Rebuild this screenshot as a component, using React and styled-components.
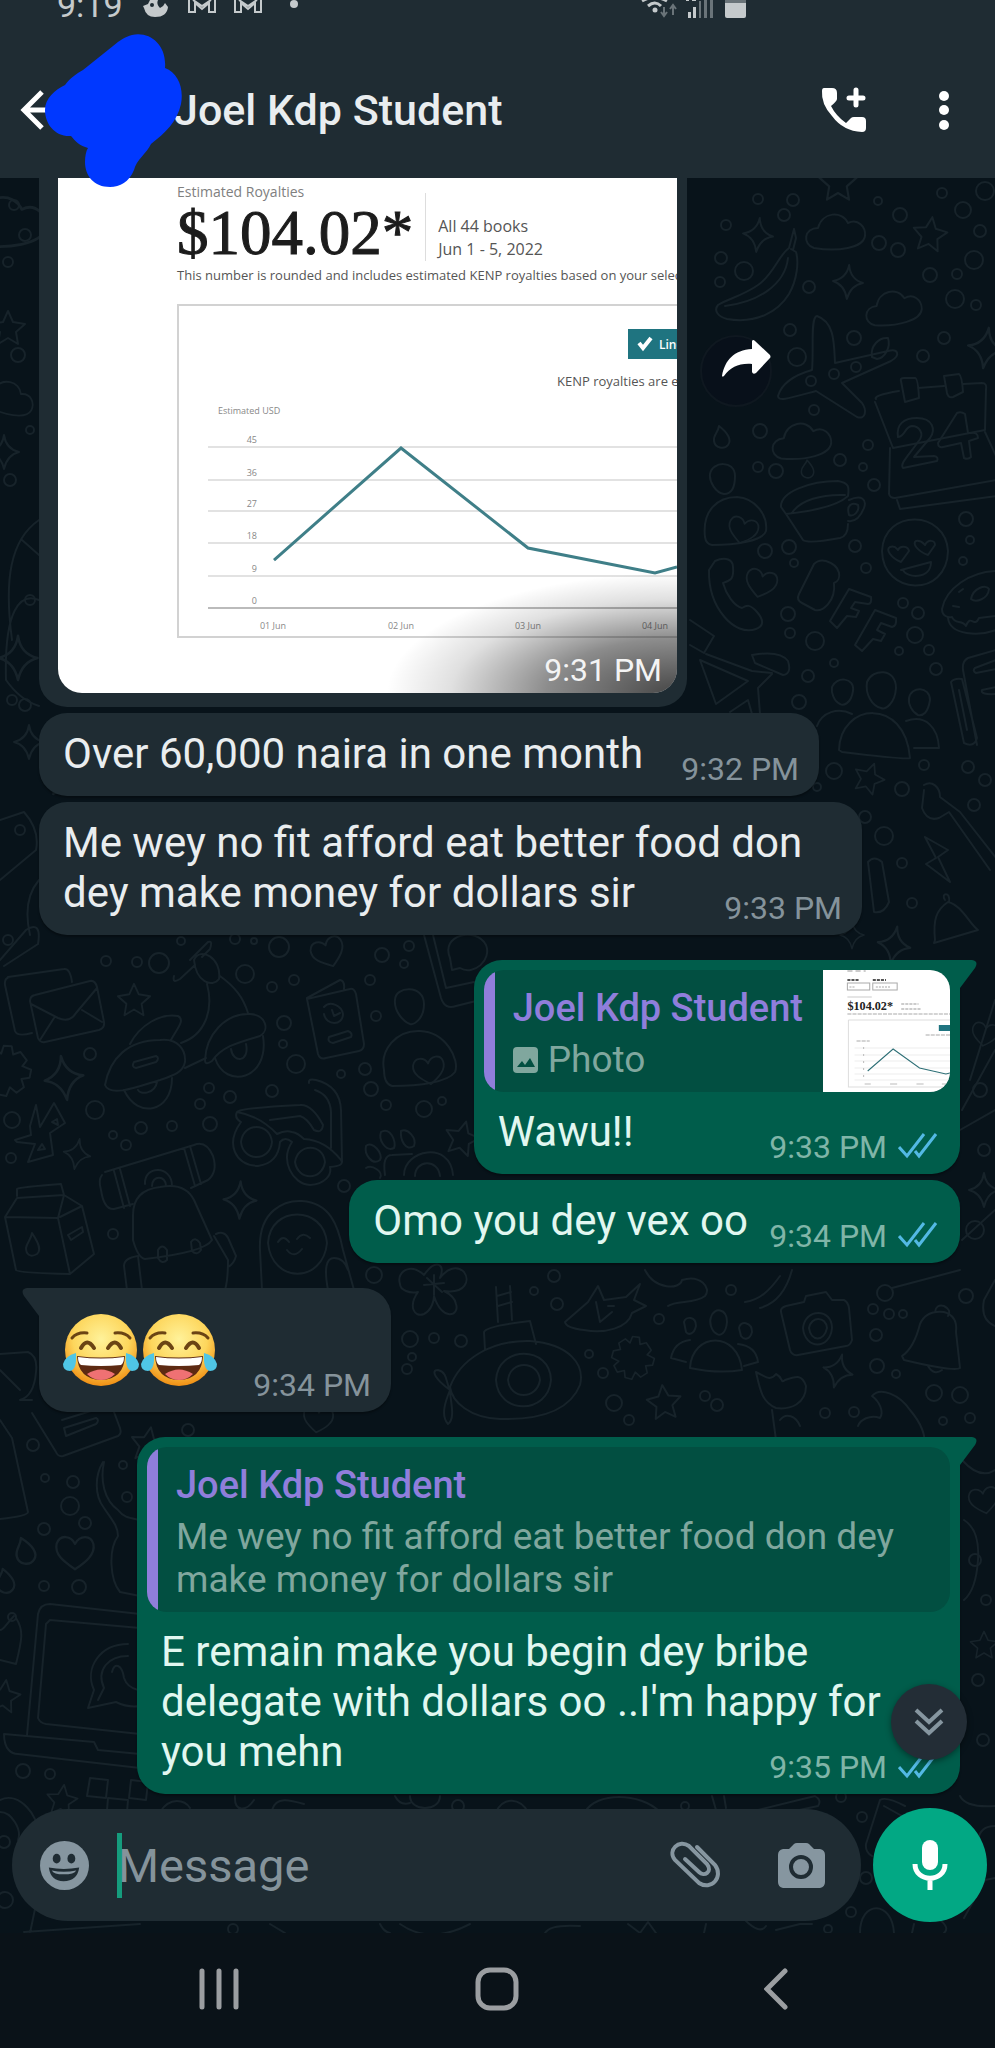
import React from "react";
import styled, {createGlobalStyle} from "styled-components";

const GlobalStyle = createGlobalStyle`
  * { box-sizing: border-box; }
  body {
    margin: 0;
    background: #0a1218;
    font-family: Roboto, "Liberation Sans", sans-serif;
  }
  button {
    padding: 0;
    border: 0;
    background: none;
    cursor: pointer;
    font: inherit;
  }
  svg { display: block; }
  p { margin: 0; }
`;
const Page = styled('div')`
  display: flex;
  flex-direction: column;
  min-height: 100vh;
`;

/* header */
const Header = styled('header')`
  position: relative;
  z-index: 2;
  background: #1f2c33;
`;
const StatusBar = styled('div')`
  display: flex;
  align-items: flex-end;
  height: 22px;
  padding: 0 248px 0 57px;
  color: #c5cacc;
`;
const Clock = styled('span')`
  font-size: 34px;
  line-height: 34px;
`;
const StatusLeft = styled('svg')`
  margin-left: 20px;
`;
const StatusRight = styled('svg')`
  margin-left: auto;
`;
const TopBar = styled('div')`
  display: flex;
  align-items: center;
  height: 156px;
  padding: 20px 26px 0 14px;
`;
const BackButton = styled('button')`
  width: 160px;
`;
const Title = styled('h1')`
  flex: 1;
  margin: 0;
  color: #e9edef;
  font-size: 43px;
  font-weight: 500;
  line-height: 50px;
`;
const HeaderButton = styled('button')`
  width: 50px;
  margin-left: 50px;
`;
const Scribble = styled('svg')`
  position: absolute;
  left: 45px;
  top: 34px;
`;

/* chat */
const Chat = styled('main')`
  position: relative;
  flex: 1;
  overflow: hidden;
  background: #08131a;
`;
const Wallpaper = styled('svg')`
  position: absolute;
  left: 0;
  top: 0;
`;
const Messages = styled('div')`
  position: relative;
  display: flex;
  flex-direction: column;
  align-items: flex-start;
  gap: 6px;
  padding: 0 35px 0 39px;
`;
const Bubble = styled('article')`
  position: relative;
  max-width: 823px;
  padding: 10px 10px 11px;
  border-radius: ${p => p.$tail && !p.$out ? "0 28px 28px 28px" : p.$tail ? "28px 0 28px 28px" : "28px"};
  align-self: ${p => p.$out ? "flex-end" : "flex-start"};
  margin-top: ${p => p.$tail ? "19px" : "0"};
  background: ${p => p.$out ? "#005d4b" : "#1f2c33"};
  color: ${p => p.$out ? "#e1f7f0" : "#e9edef"};
  box-shadow: 0 2px 2px rgba(0, 0, 0, 0.3);
`;
const TailShape = styled('svg')`
  position: absolute;
  top: 0;
  ${p => p.$out ? "left: 100%;" : "right: 100%; transform: scaleX(-1);"}
`;
const Content = styled('div')`
  display: grid;
  margin-top: ${p => p.$quoted ? "15px" : "6px"};
  padding: 0 ${p => p.$out ? "12px" : "10px"} 0 14px;
  > * { grid-area: 1 / 1; }
`;
const Body = styled('p')`
  margin-bottom: 6px;
  padding-right: ${p => p.$multi ? "34px" : p.$out ? "190px" : "156px"};
  font-size: 42px;
  line-height: 50px;
`;
const EmojiRow = styled('div')`
  display: flex;
  gap: 2px;
  padding: 9px 154px 13px 0;
`;
const Meta = styled('div')`
  display: flex;
  align-items: flex-end;
  align-self: end;
  justify-self: end;
  gap: 11px;
  color: ${p => p.$out ? "#80b5a8" : "#85939b"};
`;
const Time = styled('time')`
  font-size: 32px;
  line-height: 32px;
  white-space: nowrap;
`;
const Ticks = styled('svg')`
  margin-bottom: 4px;
`;

/* quoted message */
const Quote = styled('blockquote')`
  display: flex;
  margin: 0;
  overflow: hidden;
  border-radius: 20px;
  background: #024f41;
`;
const QuoteBar = styled('div')`
  flex: none;
  width: 11px;
  background: #8f7edb;
`;
const QuoteText = styled('div')`
  flex: 1;
  padding: 16px 20px 11px 18px;
`;
const QuoteName = styled('div')`
  margin-bottom: 8px;
  color: #8f7edb;
  font-size: 38px;
  font-weight: 500;
  line-height: 44px;
`;
const QuoteLine = styled('p')`
  display: flex;
  align-items: center;
  gap: 10px;
  color: #80a79e;
  font-size: 37px;
  line-height: 43px;
`;

/* photo message */
const PhotoRow = styled('div')`
  display: flex;
  align-items: flex-start;
`;
const PhotoBubble = styled('article')`
  padding: 0 10px 14px 19px;
  border-radius: 0 0 28px 28px;
  background: #1f2c33;
`;
const Photo = styled('figure')`
  position: relative;
  width: 619px;
  height: 515px;
  margin: 0;
  padding: 4px 0 0 119px;
  overflow: hidden;
  border-radius: 0 0 24px 24px;
  background: #fff;
  color: #555;
  font-family: "Open Sans", "Noto Sans", sans-serif;
  white-space: nowrap;
`;
const PhotoLabel = styled('div')`
  color: #808080;
  font-size: 14px;
  line-height: 20px;
`;
const AmountRow = styled('div')`
  display: flex;
  margin-top: 3px;
`;
const Amount = styled('strong')`
  color: #1c1c1c;
  font-family: "Liberation Serif", serif;
  font-size: 63px;
  font-weight: 400;
  line-height: 56px;
  -webkit-text-stroke: 1px #1c1c1c;
`;
const AmountInfo = styled('div')`
  margin: -12px 0 0 12px;
  padding: 22px 0 0 12px;
  border-left: 1px solid #ddd;
  font-size: 16px;
  line-height: 23px;
`;
const PhotoNote = styled('div')`
  margin: 4px 0 15px;
  font-size: 13px;
  line-height: 20px;
`;
const PhotoShade = styled('figcaption')`
  position: absolute;
  right: 0;
  bottom: 0;
  display: flex;
  align-items: flex-end;
  justify-content: flex-end;
  width: 290px;
  height: 120px;
  padding: 0 15px 7px 0;
  background: radial-gradient(100% 100% at 100% 100%, rgba(0, 0, 0, 0.72), rgba(0, 0, 0, 0.45) 45%, rgba(0, 0, 0, 0.12) 78%, rgba(0, 0, 0, 0));
  color: #f4f4f4;
  font-family: Roboto, "Liberation Sans", sans-serif;
`;
const ForwardButton = styled('button')`
  margin: 157px 0 0 13px;
`;
const ScrollButton = styled('button')`
  position: absolute;
  right: 28px;
  bottom: 34px;
  display: grid;
  place-items: center;
  width: 76px;
  height: 76px;
  border-radius: 50%;
  background: #232d36;
  box-shadow: 0 2px 6px rgba(0, 0, 0, 0.4);
`;

/* composer and navigation */
const Composer = styled('form')`
  position: relative;
  display: flex;
  align-items: center;
  gap: 12px;
  padding: 14px 8px 11px 12px;
`;
const Pill = styled('div')`
  display: flex;
  flex: 1;
  align-items: center;
  min-width: 0;
  height: 112px;
  padding: 0 35px 0 28px;
  border-radius: 56px;
  background: #1f2c33;
`;
const Caret = styled('span')`
  width: 5px;
  height: 65px;
  margin-left: 28px;
  background: #159c7d;
`;
const MessageInput = styled('input')`
  flex: 1;
  min-width: 0;
  height: 65px;
  margin-left: -4px;
  padding: 0;
  border: 0;
  outline: 0;
  background: transparent;
  color: #e9edef;
  font: 47px Roboto, "Liberation Sans", sans-serif;
  &::placeholder { color: #85939b; opacity: 1; }
`;
const PillButton = styled('button')`
  margin-left: ${p => p.$spaced ? "56px" : "0"};
`;
const MicButton = styled('button')`
  display: grid;
  place-items: center;
  flex: none;
  width: 114px;
  height: 114px;
  border-radius: 50%;
  background: #02a884;
`;
const NavBar = styled('nav')`
  display: grid;
  grid-template-columns: repeat(3, 1fr);
  height: 115px;
  padding: 0 80px 4px;
  background: #0a1218;
`;
const NavButton = styled('button')`
  display: grid;
  place-items: center;
`;

/* wallpaper doodles */
const STAR = "M0 -17 L5 -6 L17 -4 L8 4 L10 16 L0 10 L-10 16 L-8 4 L-17 -4 L-5 -6Z";
const SPARK = "M0 -17 Q2 -3 15 0 Q3 3 0 17 Q-3 3 -15 0 Q-2 -3 0 -17Z";
const HEART = "M0 15 C-10 8 -18 2 -16 -7 C-13 -16 -3 -14 0 -7 C4 -15 14 -15 16 -7 C18 2 9 9 0 15Z";
const CLOUD = "M-22 16 C-34 12 -32 -4 -18 -4 C-14 -20 6 -22 12 -9 C22 -14 30 -5 29 4 C27 16 2 20 -22 16Z";
const DROP = "M-3 -12 C6 -5 10 2 6 7 C2 12 -7 10 -8 3 C-9 -3 -4 -5 -3 -12Z";
const GEAR = "M-4 -25 L4 -25 L6 -17 L13 -20 L20 -12 L16 -6 L25 -3 L24 5 L16 7 L19 15 L12 21 L5 16 L2 25 L-6 24 L-8 16 L-16 19 L-21 12 L-16 6 L-25 3 L-24 -5 L-16 -8 L-19 -15 L-12 -21 L-6 -17Z";
const shapes = {star: STAR, spark: SPARK, heart: HEART, cloud: CLOUD, drop: DROP, gear: GEAR};

const dots = [
  [758,199,5],[793,200,6],[784,215,6],[726,225,5],[721,258,6],[744,271,9],[720,282,5],[809,287,6],
  [878,201,4],[900,215,7],[879,243,7],[898,250,7],[930,275,7],[957,274,5],[974,260,9],[980,231,6],
  [963,210,8],[942,193,5],[985,191,9],[955,299,9],[976,305,5],[790,330,6],[854,338,7],[797,357,9],
  [923,356,6],[944,338,6],[811,381,5],[834,374,5],[856,367,5],[814,410,5],[760,431,7],[758,467,5],
  [776,471,7],[840,460,6],[863,467,4],[868,445,5],[874,485,6],[966,519,7],[970,540,4],[963,561,4],
  [765,551,7],[789,547,7],[794,563,4],[855,546,6],[866,568,5],[788,614,7],[790,633,5],[815,641,9],
  [834,663,4],[808,676,6],[799,702,7],[903,603,5],[918,613,6],[915,635,8],[929,650,5],[899,651,4],
  [936,669,6],[834,771,8],[924,765,5],[968,767,6],[902,789,7],[985,780,6],[865,817,6],[974,805,6],
  [884,836,9],[902,863,5],[912,903,5],[817,787,4],
  [181,941,4],[106,961,5],[137,962,5],[159,963,10],[235,939,5],[279,947,10],[245,974,9],[254,941,3],
  [382,955,7],[409,946,5],[404,964,4],[370,980,5],[272,987,5],[294,980,5],[284,1023,7],[283,1044,4],
  [376,1016,5],[296,1064,9],[341,1074,4],[365,1069,6],[371,1089,7],[386,1105,5],[424,1109,8],[442,1101,4],
  [90,1054,6],[95,1110,9],[12,1120,8],[11,1158,5],[113,1135,4],[141,1128,6],[126,1145,5],[172,1126,5],
  [210,1124,7],[200,1104,5],[209,1088,5],[230,1097,6],[272,1091,6],[344,1186,6],[113,1234,5],[374,1275,8],
  [410,1339,8],[434,1338,5],[461,1341,6],[407,1369,5],[412,1357,4],[534,1291,4],[557,1304,6],[554,1276,6],
  [659,1319,5],[589,1354,4],[603,1373,5],[614,1403,8],[629,1420,5],[705,1396,5],[717,1405,6],[731,1290,5],
  [873,1309,5],[889,1314,5],[876,1335,6],[896,1374,4],[877,1366,7],[885,1293,8],[934,1393,8],[960,1395,8],
  [825,1413,5],[854,1412,5],[970,1418,5],[943,1421,4],[966,1296,7],[903,1314,4],
  [33,1445,6],[45,1478,4],[73,1482,6],[123,1465,4],[127,1497,5],[70,1506,9],[85,1523,6],[44,1529,6],
  [44,1586,5],[79,1587,7],[12,1617,4],[23,1771,7],[50,1774,5],[188,1430,6],
  [980,1090,7],[984,1150,6],[975,1230,9],[978,1680,6],[983,1740,6],[986,1600,5],[975,1560,6],
  [862,1817,5],[866,1878,6],[851,1912,5],[841,1797,5],[685,1806,4],[458,1806,6],[233,1929,5],[828,1929,4],
  [5,1900,8],[4,1842,6],[25,235,6],[14,205,5],[8,262,5],[18,355,7],[30,430,4],[12,700,5],[20,830,5],
  [8,940,5],[30,600,5],[25,705,6],[10,480,6]
];
// kind, x, y, scale, rotation
const stamps = [
  ["spark",758,235,1,6],["spark",848,282,1,4],["spark",986,348,1.2,8],["cloud",836,232,1,0],["cloud",894,308,0.95,-6],
  ["cloud",802,441,1,-4],["star",930,234,1,8],["star",838,182,1.1,0],["drop",722,438,1,0],["drop",808,470,0.8,8],
  ["heart",761,583,0.95,14],["heart",743,530,0.9,14],["star",869,778,0.9,20],["spark",894,945,1.1,10],["spark",852,935,0.8,0],
  ["heart",328,952,1,-20],["star",134,1000,0.95,0],["spark",64,1078,1.3,-8],["spark",77,1154,0.9,10],["spark",240,1200,1.1,2],
  ["gear",6,1071,1,4],["heart",429,1070,0.95,-8],["star",462,1138,1,14],["spark",838,1371,1,14],["star",664,1402,1,-6],
  ["gear",633,1358,0.85,8],["heart",318,1419,0.9,8],["star",148,1444,1,10],["heart",75,1552,1.15,0],["drop",26,1552,1.2,-6],
  ["drop",6,1582,1.1,0],["star",4,1696,0.95,8],["star",62,1800,0.9,8],["star",8,328,1,0],["spark",18,658,1.3,0],
  ["cloud",5,222,1.4,0],["spark",4,452,1,0],["spark",29,742,1,0],["cloud",8,398,0.9,20],["star",62,780,0.9,0],
  ["heart",985,1034,0.8,10],["spark",984,1190,1,0],["heart",984,1500,0.9,-10],["star",984,1645,0.8,0]
];
const drawings = [
  // banana and plane
  "M794 229 L789 248 C778 256 774 274 758 285 C744 295 728 299 718 305 C713 311 719 317 727 319 C756 324 778 312 789 294 C797 280 799 262 796 252 L791 249 M794 229 L796 238 L793 250 M788 258 C785 285 758 302 725 306",
  "M817 316 C810 317 814 350 812 370 C798 374 782 382 778 396 C778 402 790 398 816 391 L857 417 C866 420 867 410 862 403 L842 383 L891 361 C901 355 898 348 888 351 L835 363 C834 345 835 322 817 316Z M872 357 C870 346 879 337 888 338 C891 347 885 358 877 359Z",
  // calendar
  "M876 399 C874 397 880 394 899 391 M918 388 L944 386 M963 384 L982 383 Q987 383 986 389 L985 430 L893 448 L875 402 M985 432 L996 456 M890 448 L889 494 Q890 498 895 498 L996 480 M897 500 L900 509 L996 496 M901 381 Q900 378 904 378 L915 378 Q918 378 919 398 L905 402Z M944 376 L959 374 Q962 376 963 392 L953 397 Q948 398 947 393Z",
  "M898 437 C896 424 904 418 917 418 C933 418 936 430 930 438 L914 457 L934 456 Q939 457 937 461 L903 468 C900 464 905 460 918 442 C926 433 918 426 912 426 C904 427 906 436 898 437Z M957 413 L938 443 Q938 448 943 447 L961 443 L964 458 Q968 460 971 457 L969 441 L978 438 Q978 432 971 433 L968 433 L965 414 Q961 411 957 413Z",
  // cup
  "M781 507 C780 492 810 481 838 481 C850 483 849 488 848 496 C835 508 805 512 786 514Z M786 514 L803 540 Q808 544 840 538 Q848 536 848 524 M792 513 C800 500 822 494 845 495 M849 500 C862 494 867 500 864 508 C860 518 854 522 848 521 M849 515 C846 505 852 502 858 505 C860 512 853 517 849 515Z",
  // person, phone
  "M710 474 C712 461 735 460 735 476 C735 492 728 494 724 494 C716 493 709 482 710 474Z M705 537 C702 510 718 497 737 497 C755 498 768 515 766 531 C763 541 735 545 712 545 Q706 544 705 537Z",
  "M715 561 C726 556 733 560 733 567 C734 579 731 580 723 583 C726 594 734 606 742 608 C747 605 750 604 757 612 C764 620 764 626 756 629 C735 637 708 608 709 570Z",
  // BFF
  "M799 594 L814 564 Q819 559 826 561 C842 566 842 580 834 583 C836 602 822 612 815 610 L802 603 Q796 600 799 594Z M830 621 L849 589 L871 597 Q872 604 868 604 L855 602 L851 608 L859 611 L856 617 L847 616 L837 628Z M855 645 L875 610 L896 618 Q897 626 892 627 L881 623 L877 630 L885 634 L881 641 L873 639 L862 651Z",
  // love face
  "M882 551 C884 508 946 510 948 551 C947 598 883 596 882 551Z M901 570 L931 562 C931 580 906 578 903 570Z M901 562 C891 558 885 549 890 547 C895 545 897 549 898 550 C900 545 908 546 909 551Z M928 555 C917 551 912 543 916 541 C921 540 924 544 925 545 C928 539 935 540 935 545Z",
  // doughnut, notes
  "M996 571 C970 572 946 588 942 609 C942 616 948 618 952 617 C955 625 962 619 966 626 C971 613 974 629 979 618 L996 616 M948 618 C950 636 980 636 996 630 M971 599 C973 588 986 584 989 589 C988 599 976 603 971 599Z M953 606 L959 607 M959 592 L963 589",
  "M996 650 L968 658 Q962 661 963 670 L977 745 M996 660 L975 668 Q972 671 976 673 L996 669 M996 687 L982 690 Q980 695 996 694 M951 682 Q954 678 962 679 L977 738 Q974 748 964 743Z M959 690 L967 730",
  // ladder figure, group
  "M690 620 L714 636 L704 653 L690 645 M706 654 L752 671 L772 673 M700 660 L716 704 L748 681Z M752 655 Q780 650 788 661 Q792 674 783 675 L755 663Z M772 674 L758 688 L760 714 M730 712 L748 700 L752 714",
  "M832 687 C836 676 855 677 853 691 C851 704 843 706 840 704 C834 701 831 693 832 687Z M867 682 C873 668 896 668 896 688 C895 704 885 710 881 708 C872 706 865 694 867 682Z M909 698 C911 686 930 686 930 700 C928 713 923 716 918 715 C912 712 908 704 909 698Z M839 750 C840 703 905 696 910 758 Q908 760 842 752Z M852 714 C838 707 822 712 817 726 M906 721 C926 714 938 728 939 748 L914 748",
  // pick, lightning, guitar
  "M924 785 C932 780 940 787 940 797 L960 812 L996 858 M924 790 L922 808 Q927 822 939 818 L949 812 L990 870 M868 862 Q874 855 882 862 L889 902 Q884 914 874 912Z M925 837 L948 850 L938 857 L950 882 L926 864 L936 858Z",
  "M935 940 C933 920 936 910 948 902 C962 905 970 925 978 930 L934 943Z M945 900 C940 893 951 891 949 902",
  // envelopes and scooter
  "M8 977 L64 969 Q70 968 72 982 M5 985 Q4 978 10 977 M5 985 L15 1031 Q17 1037 32 1033 M35 995 L90 981 Q95 980 97 987 L104 1022 Q105 1028 99 1030 L45 1042 Q40 1043 38 1038 L30 1001 Q30 996 35 995Z M31 1004 L58 1018 Q70 1023 76 1013 L97 988 M40 1040 L54 1018 M82 1010 L102 1022",
  "M105 1085 C110 1058 128 1040 160 1040 C178 1038 186 1050 185 1062 C183 1072 175 1075 160 1080 C140 1086 110 1098 105 1085Z M130 1044 C140 1025 160 1013 178 1016 C186 1020 176 1030 171 1040 M124 1090 C138 1120 172 1112 172 1078 M138 1090 C140 1095 155 1094 157 1082 M134 1062 L156 1056 Q160 1058 156 1062 L136 1068 Q131 1067 134 1062Z M181 1043 C205 1035 214 1010 207 984 M220 976 C235 987 243 997 248 1013 M185 1068 L206 1058 M205 1060 C206 1035 225 1013 250 1014 C266 1015 270 1030 260 1036 C240 1042 222 1046 212 1061 Q205 1066 205 1060Z M215 1058 C225 1090 270 1080 263 1036 M231 1049 C233 1064 250 1062 246 1044 M174 976 Q172 984 180 979 L195 965 M190 960 L208 942 Q213 940 210 949 L202 957 M194 960 C200 946 222 958 219 979 C212 988 196 982 194 960Z",
  // passport
  "M307 998 L340 980 Q345 981 344 989 M307 999 L350 989 Q354 988 356 994 L364 1044 Q364 1050 359 1051 L326 1058 Q320 1060 318 1054Z M324 1007 C330 1000 342 1006 343 1014 C343 1026 326 1026 324 1014 M332 1010 L334 1016 L340 1013 M329 1037 L348 1031 Q353 1033 351 1037 L333 1043 Q327 1042 329 1037Z",
  "M395 1000 C395 986 424 984 424 1004 C424 1020 413 1025 410 1024 C402 1021 394 1010 395 1000Z M384 1070 C380 1050 396 1030 420 1031 C446 1032 460 1060 455 1072 C448 1082 420 1086 392 1086 Q384 1084 384 1070Z",
  // phone edge
  "M424 935 L441 998 Q445 1010 456 1006 L476 1001 M433 935 L446 988 L474 982 M450 958 C440 935 476 926 486 945 C492 960 474 976 460 968 L452 970Z",
  // sunglasses
  "M237 1112 Q240 1108 300 1105 Q312 1104 323 1125 Q322 1134 314 1130 Q307 1118 300 1116 L270 1120 M309 1083 Q308 1078 316 1080 Q340 1086 341 1110 L342 1162 M315 1090 Q330 1095 331 1112 L331 1148 M237 1112 Q234 1118 241 1122 C225 1144 235 1165 258 1166 C272 1164 279 1155 280 1142 Q285 1136 292 1142 C280 1160 292 1184 310 1185 C325 1184 332 1175 330 1167 Q345 1166 341 1160 Q325 1140 304 1139 Q298 1133 292 1132 Q285 1130 277 1134 Q260 1116 237 1112Z M241 1142 C243 1122 270 1122 272 1142 C270 1162 243 1162 241 1142Z M295 1162 C298 1143 323 1143 325 1162 C322 1181 298 1181 295 1162Z",
  // bandage and rocks
  "M15 1140 L31 1135 L30 1126 L36 1105 L40 1127 L54 1103 L65 1123 L50 1133 L53 1155 L28 1162 L35 1144 L17 1142Z M52 1122 L57 1119 L58 1125Z M38 1150 L42 1144 L45 1149Z",
  // backpack and mat
  "M105 1172 L194 1145 Q206 1140 213 1156 Q218 1172 208 1180 L191 1188 M102 1175 Q98 1180 101 1190 Q104 1210 114 1209 L133 1204 M114 1171 L124 1208 M120 1169 L130 1206 M184 1148 L195 1186 M190 1146 L201 1184 M145 1184 C144 1165 172 1165 172 1186 M152 1186 C152 1175 166 1175 166 1186",
  "M133 1215 Q133 1190 160 1187 Q185 1182 194 1200 L212 1240 Q205 1252 145 1259 Q138 1258 133 1240Z M214 1236 L228 1260 Q228 1280 225 1290 M138 1256 L142 1290 M138 1256 Q124 1258 124 1266 L127 1290 M216 1234 Q225 1230 229 1240 L236 1256 Q234 1264 228 1267 M158 1250 Q162 1243 167 1250 L167 1260 Q162 1265 158 1258Z M191 1242 Q195 1236 200 1243 L201 1250 Q197 1256 192 1251Z",
  // milk carton
  "M17 1196 L17 1189 Q20 1187 61 1184 L64 1195 L17 1198 L5 1217 L16 1270 Q18 1273 70 1274 L94 1254 L82 1206 L64 1195 L58 1218 L6 1217 M58 1218 L70 1274 M60 1217 L82 1206 M32 1233 C38 1242 42 1250 37 1254 C30 1258 26 1254 26 1248 C27 1242 31 1240 32 1233Z M68 1235 L82 1227 L83 1232 L71 1240Z",
  // hooded face, paw
  "M262 1290 L260 1250 C258 1210 285 1200 302 1201 C330 1203 338 1225 343 1250 L354 1290 M268 1243 C270 1205 324 1205 327 1243 C323 1284 272 1284 268 1243Z M278 1242 Q283 1234 289 1242 M297 1239 Q303 1231 310 1238 M287 1250 Q294 1259 302 1249 M328 1290 Q322 1258 334 1258 Q344 1258 348 1270",
  "M385 1175 Q382 1155 392 1155 L412 1154 M404 1175 C404 1150 450 1140 453 1175 M415 1176 C415 1160 438 1158 440 1176 M366 1146 C372 1140 384 1154 380 1160 C372 1166 364 1154 366 1146Z M381 1132 C390 1126 397 1142 394 1148 C386 1152 378 1140 381 1132Z M401 1131 C408 1128 417 1138 414 1146 C406 1152 400 1140 401 1131Z M366 1168 C372 1164 384 1172 380 1178",
  // flower
  "M424 1275 C410 1262 396 1272 400 1284 C400 1290 410 1294 418 1292 C408 1306 414 1318 424 1314 C432 1310 434 1300 434 1296 C442 1322 460 1316 456 1304 C455 1298 450 1294 444 1291 C466 1294 470 1280 464 1272 C456 1264 446 1270 440 1278 C446 1264 436 1258 424 1275Z M434 1275 L434 1295 M424 1285 L444 1283 M427 1278 L442 1292",
  // submarine
  "M496 1287 L498 1322 M510 1286 L512 1320 M497 1296 L511 1292 M498 1306 L512 1302 M485 1350 L484 1332 Q486 1326 530 1321 L536 1344 M450 1387 C460 1360 490 1340 530 1341 C570 1344 585 1365 580 1385 C570 1410 540 1420 500 1419 C470 1418 452 1402 450 1387Z M496 1380 C498 1345 550 1345 551 1380 C548 1415 498 1415 496 1380Z M508 1380 C510 1360 538 1360 540 1380 C537 1400 510 1400 508 1380Z M450 1390 C436 1380 430 1370 438 1370 C448 1372 446 1384 450 1390 C446 1400 440 1415 448 1424 C456 1418 450 1400 450 1390Z",
  // fish, monkey
  "M565 1322 L588 1302 L598 1286 L604 1300 L626 1297 L640 1284 L634 1300 L646 1306 L632 1313 C628 1328 605 1334 584 1330 Q566 1328 565 1322Z M596 1302 L600 1322 L612 1312 M608 1306 L614 1306",
  "M645 1270 C655 1290 680 1290 682 1280 C700 1274 712 1288 705 1296 C695 1304 676 1300 668 1306 M745 1302 C760 1300 770 1290 780 1276 M760 1308 C775 1304 786 1292 792 1270 M892 1288 L960 1270",
  // people group
  "M711 1317 C714 1307 727 1308 727 1322 C726 1334 720 1336 717 1334 C711 1331 709 1322 711 1317Z M684 1322 C686 1316 696 1316 696 1326 C694 1335 688 1335 686 1332Z M739 1328 C740 1320 752 1322 752 1332 C750 1340 744 1340 741 1336Z M690 1368 C692 1332 738 1330 742 1370 Q718 1374 690 1368Z M690 1340 Q674 1342 671 1358 L686 1362 M738 1344 Q756 1346 758 1362 L744 1366",
  // camera, bell, tulip
  "M781 1312 Q780 1308 786 1306 L804 1302 L806 1296 L826 1292 L832 1300 L844 1300 Q848 1302 849 1308 L852 1340 Q850 1346 846 1346 L798 1355 Q792 1356 790 1350Z M803 1328 C805 1308 832 1308 832 1328 C830 1350 805 1350 803 1328Z M809 1328 C811 1316 826 1316 827 1328 C824 1342 811 1342 809 1328Z",
  "M902 1356 Q914 1348 920 1324 Q926 1310 944 1312 Q958 1316 956 1332 L960 1368 Q955 1372 904 1360Z M935 1312 Q936 1304 944 1306 Q952 1310 948 1316 M928 1366 Q934 1376 942 1370",
  "M756 1372 C765 1376 770 1382 776 1374 C784 1378 780 1384 785 1380 C796 1376 802 1374 806 1386 C806 1404 790 1410 776 1408 C762 1402 760 1390 756 1372Z M772 1410 L776 1440 M780 1420 C786 1412 796 1416 800 1426",
  // horseshoe magnet, left notes
  "M872 1396 C880 1386 900 1395 910 1410 C922 1424 925 1436 924 1440 M872 1396 C880 1402 884 1412 880 1418 C870 1414 860 1420 858 1426",
  "M32 1413 L56 1452 Q58 1457 63 1456 L118 1436 Q122 1434 120 1428 L114 1412 M62 1420 L94 1410 M64 1428 L96 1418 Q100 1420 96 1424 L66 1436Z",
  "M0 1420 L12 1438 L28 1512 Q28 1516 0 1519 M0 1354 L28 1352 Q38 1356 36 1372 Q34 1396 20 1400 L32 1400 M0 1370 L20 1390",
  // genie
  "M103 1462 C95 1475 94 1495 104 1508 C112 1520 118 1526 118 1536 C108 1550 110 1580 120 1592 L140 1596 M104 1462 C100 1480 104 1500 118 1510 C124 1518 130 1518 140 1520",
  // laptop
  "M140 1614 L50 1604 Q40 1604 38 1614 L27 1735 M140 1628 L50 1620 L46 1624 L38 1718 Q40 1723 46 1724 L140 1734 M4 1734 L94 1742 L98 1750 L140 1754 M4 1734 C4 1750 12 1754 18 1754 L140 1768",
  "M88 1708 L94 1690 C84 1668 100 1644 128 1644 M98 1700 L104 1688 C96 1670 108 1656 128 1656 M140 1706 C128 1708 120 1704 116 1702 L88 1708 M112 1672 C114 1662 122 1664 124 1678 C126 1684 130 1688 138 1690",
  "M14 1616 C6 1624 4 1630 0 1630 M16 1618 C24 1630 22 1640 16 1664 L0 1660",
  // checker flag and lower strip
  "M90 1778 L108 1780 L106 1798 L87 1796Z M131 1780 L148 1782 L146 1800 L129 1798Z M108 1798 L128 1800 L127 1812 L107 1810Z M0 1800 C20 1790 40 1820 36 1828 M0 1812 C12 1812 22 1830 18 1840",
  "M160 1812 C170 1796 185 1800 190 1808 M235 1796 C234 1812 246 1812 254 1800 M272 1810 C276 1796 290 1800 304 1804 M410 1796 C410 1812 440 1812 440 1796 M395 1796 Q400 1806 410 1803 M496 1812 C504 1796 520 1798 528 1812 M585 1812 C596 1792 640 1792 660 1812 M712 1796 L716 1810 M724 1796 L726 1808 M750 1812 L815 1796 Q822 1800 818 1806 L790 1812",
  "M880 1800 Q886 1796 905 1806 M880 1800 L866 1844 Q865 1852 872 1856 M884 1806 L902 1816 M960 1796 Q966 1808 995 1806 M978 1840 Q980 1826 995 1826 M995 1878 L985 1880 L964 1918",
  "M30 1933 L40 1885 M24 1932 L140 1924 M270 1924 L285 1933 M380 1924 Q384 1932 390 1933 M400 1924 Q430 1945 470 1924 M545 1933 Q550 1924 580 1926 M628 1924 L640 1933 L648 1922 L656 1933 M706 1924 L704 1933 M745 1920 Q760 1935 766 1926 M776 1930 L800 1924 L812 1924 M860 1933 C860 1900 892 1900 894 1933 M912 1933 L914 1924 M940 1920 Q950 1928 944 1933",
  // left margin
  "M39 520 C10 540 4 580 12 640 M39 600 C20 592 4 610 6 680 Q20 700 39 706 M39 555 L22 540 M0 820 L24 812 Q40 830 36 850 L0 880 M0 960 L26 930 Q42 920 38 944 L4 966 M39 880 Q22 900 30 935",
  // right strip
  "M995 1280 L984 1300 Q980 1320 995 1326 M962 1460 Q980 1480 995 1470 M964 1520 Q980 1530 978 1560 Q976 1590 964 1600 M995 1000 L970 1080 M962 1110 L995 1050 M960 1130 L995 1110 M962 1240 L995 1210"
];

const Backdrop = () => <Wallpaper width="995" height="1755" viewBox="0 178 995 1755" fill="none" stroke="#17232a" strokeWidth="2" strokeLinejoin="round" strokeLinecap="round" aria-hidden="true">
  {dots.map(([x, y, r]) => <circle key={`${x}-${y}`} cx={x} cy={y} r={r} />)}
  {stamps.map(([kind, x, y, scale, turn]) => (
    <path key={`${x}-${y}`} d={shapes[kind]} transform={`translate(${x} ${y}) rotate(${turn}) scale(${scale})`} />
  ))}
  {drawings.map((d, i) => <path key={i} d={d} />)}
</Wallpaper>;

const DoubleTick = () => <Ticks width="40" height="27" viewBox="0 0 40 27" fill="none" stroke="#53b9e4" strokeWidth="3" aria-label="Read">
  <path d="M1 15 L9 24 L26 2" />
  <path d="M17 19 L21 24 L38 2" />
</Ticks>;

const Tail = ({out}) => <TailShape $out={out} width="17" height="28" viewBox="0 0 17 28" fill={out ? "#005d4b" : "#1f2c33"} aria-hidden="true">
  <path d="M0 0 H12 Q19 1 15 8 L0 28Z" />
</TailShape>;

const Stamp = ({out, children}) => <Meta $out={out}>
  <Time>{children}</Time>
  {out && <DoubleTick />}
</Meta>;

const Message = ({out, tail, multi, time, quote, children}) => <Bubble $out={out} $tail={tail}>
  {tail && <Tail out={out} />}
  {quote}
  <Content $out={out} $quoted={!!quote}>
    <Body $out={out} $multi={multi}>{children}</Body>
    <Stamp out={out}>{time}</Stamp>
  </Content>
</Bubble>;

const JoyFace = ({id}) => <svg width="76" height="75" viewBox="0 0 76 75" role="img" aria-label="Face with tears of joy">
  <defs>
    <radialGradient id={id} cx="50%" cy="35%" r="65%">
      <stop offset="0" stopColor="#fff29a" />
      <stop offset="0.6" stopColor="#fdd65c" />
      <stop offset="1" stopColor="#f08f14" />
    </radialGradient>
  </defs>
  <circle cx="38" cy="37" r="36" fill={`url(#${id})`} />
  <g fill="none" stroke="#6b4414" strokeLinecap="round">
    <path d="M9 25 Q14 19 24 20 M67 25 Q62 19 52 20" strokeWidth="3" />
    <path d="M18 35 Q24 24 31 35 M45 35 Q52 24 58 35" strokeWidth="4" />
  </g>
  <path d="M14 43 Q38 46 62 43 Q61 66 38 67 Q15 66 14 43Z" fill="#5d2a12" />
  <path d="M15 44 Q38 47 61 44 Q61 50 58 52 Q38 54 18 52 Q15 50 15 44Z" fill="#fff" />
  <path d="M24 61 Q38 52 52 61 Q46 67 38 67 Q30 67 24 61Z" fill="#ef7173" />
  <path d="M13 40 Q2 43 0 51 Q0 58 7 58 Q14 57 13 40Z M63 40 Q74 43 76 51 Q76 58 69 58 Q62 57 63 40Z" fill="#4fc6e6" />
</svg>;

const chartRows = [["45", 147], ["36", 180], ["27", 211], ["18", 243], ["9", 276], ["0", 308]];
const chartDays = [["01 Jun", 96], ["02 Jun", 224], ["03 Jun", 351], ["04 Jun", 478]];

const RoyaltyChart = () => <svg width="500" height="345" viewBox="0 0 500 345" fontFamily="Open Sans, sans-serif" fill="#888">
  <rect x="1" y="5" width="600" height="332" fill="none" stroke="#d2d2d2" strokeWidth="2" />
  <rect x="451" y="29" width="60" height="30" fill="#1f7480" />
  <path d="M462 43 L466 48 L474 38" fill="none" stroke="#fff" strokeWidth="4" />
  <text x="482" y="49" fontSize="12" fontWeight="600" fill="#fff">Line</text>
  <text x="380" y="86" fontSize="13" fill="#555">KENP royalties are estimated</text>
  <text x="41" y="114" fontSize="9">Estimated USD</text>
  {chartRows.map(([label, y]) => <g key={label}>
    <text x="80" y={y - 4} fontSize="9" textAnchor="end">{label}</text>
    <path d={`M31 ${y} H500`} stroke={label === "0" ? "#bbb" : "#e2e2e2"} strokeWidth="2" />
  </g>)}
  {chartDays.map(([label, x]) => <text key={label} x={x} y="329" fontSize="9" textAnchor="middle">{label}</text>)}
  <path d="M97 260 L224 148 L351 248 L478 273 L500 267" fill="none" stroke="#3f7f88" strokeWidth="3" />
</svg>;

const Thumbnail = () => <svg width="127" height="122" viewBox="0 0 125 122" preserveAspectRatio="none" role="img" aria-label="Photo">
  <rect width="125" height="122" fill="#fff" />
  <path d="M24 1 H42" stroke="#999" strokeDasharray="5 3" />
  <path d="M24 10 H36 M49 10 H62" stroke="#555" strokeWidth="2" strokeDasharray="3 1" />
  <path d="M24 13 H46 V20 H24Z M49 13 H73 V20 H49Z" fill="none" stroke="#aaa" />
  <path d="M26 17 H31 M52 17 H66" stroke="#aaa" strokeDasharray="2 1" />
  <path d="M24 27 H48" stroke="#ccc" />
  <text x="24" y="40" fontFamily="Liberation Serif, serif" fontWeight="700" fontSize="12" fill="#222">$104.02*</text>
  <path d="M77 34 H94 M77 39 H97" stroke="#999" strokeDasharray="3 1" />
  <path d="M24 44 H125" stroke="#aaa" strokeDasharray="4 1" />
  <path d="M25 50 V117 H125 M25 50 H125" fill="none" stroke="#ddd" />
  <rect x="114" y="55" width="11" height="6" fill="#1f7480" />
  <path d="M101 65 H125 M33 71 H46" stroke="#aaa" strokeDasharray="4 1" />
  <path d="M31 78 H125 M31 85 H125 M31 91 H125 M31 98 H125 M31 104 H125 M31 110 H125" stroke="#eee" />
  <path d="M40 77 V111" stroke="#bbb" strokeDasharray="2 5" />
  <path d="M41 114 H47 M66 114 H73 M92 114 H99 M117 114 H123" stroke="#bbb" />
  <path d="M44 101 L69 79 L95 98 L121 104 L125 103" fill="none" stroke="#2d6f76" />
</svg>;

const PhotoMessage = () => <PhotoRow>
  <PhotoBubble>
    <Photo>
      <PhotoLabel>Estimated Royalties</PhotoLabel>
      <AmountRow>
        <Amount>$104.02*</Amount>
        <AmountInfo>
          <div>All 44 books</div>
          <div>Jun 1 - 5, 2022</div>
        </AmountInfo>
      </AmountRow>
      <PhotoNote>This number is rounded and includes estimated KENP royalties based on your selection</PhotoNote>
      <RoyaltyChart />
      <PhotoShade><Time>9:31 PM</Time></PhotoShade>
    </Photo>
  </PhotoBubble>
  <ForwardButton aria-label="Forward">
    <svg width="72" height="72" viewBox="0 0 72 72">
      <circle cx="36" cy="36" r="35" fill="#08101a" stroke="#0f1820" strokeWidth="2" />
      <path d="M22 41 C25 25 34 15 52 14 V6 Q53 4 55 6 L70 20 Q71 22 70 23 L56 38 Q53 40 52 37 V29 C39 28 31 32 24 41 Q22 42 22 41Z" fill="#fff" />
    </svg>
  </ForwardButton>
</PhotoRow>;

const PhotoQuote = () => <Quote>
  <QuoteBar />
  <QuoteText>
    <QuoteName>Joel Kdp Student</QuoteName>
    <QuoteLine>
      <svg width="25" height="26" viewBox="0 0 25 26" aria-hidden="true">
        <rect width="25" height="26" rx="4" fill="#80a79e" />
        <path d="M4 20 L9 14 L12 18 L17 11 L22 20Z" fill="#024f41" />
      </svg>
      Photo
    </QuoteLine>
  </QuoteText>
  <Thumbnail />
</Quote>;

const TextQuote = () => <Quote>
  <QuoteBar />
  <QuoteText>
    <QuoteName>Joel Kdp Student</QuoteName>
    <QuoteLine>Me wey no fit afford eat better food don dey make money for dollars sir</QuoteLine>
  </QuoteText>
</Quote>;

const ChatHeader = () => <Header>
  <StatusBar>
    <Clock>9:19</Clock>
    <StatusLeft width="160" height="22" viewBox="0 0 160 22" fill="#c5cacc" aria-hidden="true">
      <path d="M7 0 H15 Q13 4 17 8 Q21 6 22 3 L25 7 Q24 17 12 17 Q3 17 1 8 L0 6 L5 4Z" />
      <circle cx="9" cy="5" r="2" fill="#1f2c33" />
      <path d="M46 0 V12 H52 V3 L59 9 L66 3 V12 H72 V0 M50 0 L59 6 L68 0" fill="none" stroke="#c5cacc" strokeWidth="2" />
      <path d="M92 0 V12 H98 V3 L105 9 L112 3 V12 H118 V0 M96 0 L105 6 L114 0" fill="none" stroke="#c5cacc" strokeWidth="2" />
      <circle cx="151" cy="4" r="4" />
    </StatusLeft>
    <StatusRight width="106" height="22" viewBox="0 0 106 22" fill="#c5cacc" aria-hidden="true">
      <path d="M1 1 Q13 -6 26 1 M7 6 Q14 0 20 6" fill="none" stroke="#c5cacc" strokeWidth="3" />
      <circle cx="14" cy="10" r="2.5" />
      <path d="M23 7 V15 M20 12 L23 16 L26 12 M32 15 V6 M29 9 L32 5 L35 9" fill="none" stroke="#6a7479" strokeWidth="2" />
      <path d="M47 12 H50 V18 H47Z M52 7 H55 V18 H52Z M45 0 H48 V1 H45Z M51 0 H55 V1 H51Z" />
      <path d="M58 1 H60 V18 H58Z M63 0 H66 V18 H63Z M69 0 H72 V18 H69Z" fill="#6a7479" />
      <path d="M84 0 H105 V3 H84Z" fill="#6a7479" />
      <path d="M84 3 H105 V16 Q105 18 103 18 H86 Q84 18 84 16Z" />
    </StatusRight>
  </StatusBar>
  <TopBar>
    <BackButton aria-label="Back">
      <svg width="50" height="50" viewBox="0 0 50 50" fill="none" stroke="#fff" strokeWidth="5">
        <path d="M28 7 L10 25 L28 43 M10 25 H46" />
      </svg>
    </BackButton>
    <Title>Joel Kdp Student</Title>
    <HeaderButton aria-label="Add call">
      <svg width="50" height="50" viewBox="0 0 50 50" fill="#fff">
        <path d="M5 3 H13 Q18 3 18 8 V14 Q18 16 12 21 Q17 31 27 38 L32 33 Q33 32 35 32 H43 Q47 32 47 36 V43 Q47 47 43 47 Q24 46 13 31 Q2 19 3 6 Q3 3 5 3Z" />
        <path d="M37 5 V20 M30 13 H44" fill="none" stroke="#fff" strokeWidth="5" strokeLinecap="round" />
      </svg>
    </HeaderButton>
    <HeaderButton aria-label="More options">
      <svg width="50" height="50" viewBox="0 0 50 50" fill="#fff">
        <circle cx="25" cy="11" r="5" />
        <circle cx="25" cy="25" r="5" />
        <circle cx="25" cy="40" r="5" />
      </svg>
    </HeaderButton>
  </TopBar>
  <Scribble width="137" height="154" viewBox="45 34 137 154" aria-hidden="true">
    <path fill="#0038ff" d="M132 35 C150 31 167 45 165 68 C178 73 184 88 181 104 C177 122 165 133 151 144 C147 153 136 160 134 170 C129 182 120 187 110 187 C94 187 85 176 85 162 C85 156 86 151 88 148 C80 146 75 141 71 136 C55 137 45 124 45 110 C45 98 55 90 65 85 C70 78 76 74 83 70 L113 46 C120 40 125 37 132 35Z" />
  </Scribble>
</Header>;

const ChatComposer = () => <Composer onSubmit={e => e.preventDefault()}>
  <Pill>
    <PillButton type="button" aria-label="Emoji">
      <svg width="49" height="49" viewBox="0 0 50 50">
        <circle cx="25" cy="25" r="25" fill="#8696a0" />
        <g fill="#1f2c33">
          <ellipse cx="17" cy="18" rx="4" ry="5" />
          <ellipse cx="32" cy="18" rx="4" ry="5" />
          <path d="M9 27 Q24 30 40 27 Q38 41 24 41 Q11 41 9 27Z" />
        </g>
        <path d="M12 30 Q24 33 37 30 Q35 34 24 34 Q14 34 12 30Z" fill="#8696a0" />
      </svg>
    </PillButton>
    <Caret />
    <MessageInput type="text" placeholder="Message" aria-label="Message" />
    <PillButton type="button" aria-label="Attach">
      <svg width="52" height="48" viewBox="0 0 52 48" fill="none" stroke="#8696a0" strokeWidth="4" strokeLinecap="round">
        <path d="M28 6 L46 24 C55 36 42 50 30 42 L6 19 C-2 9 10 -2 20 5 L38 23 C44 31 35 36 30 31 L16 18" />
      </svg>
    </PillButton>
    <PillButton $spaced type="button" aria-label="Camera">
      <svg width="49" height="46" viewBox="0 0 49 46">
        <path d="M6 7 H12 L17 2 Q18 1 20 1 H29 Q31 1 32 2 L37 7 H43 Q48 8 48 13 V40 Q48 45 43 46 H6 Q1 45 1 40 V13 Q1 8 6 7Z" fill="#8696a0" />
        <circle cx="24" cy="25" r="10" fill="none" stroke="#1f2c33" strokeWidth="4" />
      </svg>
    </PillButton>
  </Pill>
  <MicButton type="button" aria-label="Voice message">
    <svg width="36" height="50" viewBox="0 0 36 50">
      <rect x="10" y="0" width="16" height="30" rx="8" fill="#fff" />
      <path d="M3 24 C3 43 33 43 33 24 M18 38 V50" fill="none" stroke="#fff" strokeWidth="5" />
    </svg>
  </MicButton>
</Composer>;

const SystemNav = () => <NavBar aria-label="System">
  <NavButton aria-label="Recents">
    <svg width="40" height="42" viewBox="0 0 40 42" fill="none" stroke="#9b9ea1" strokeWidth="5" strokeLinecap="round">
      <path d="M3 3 V39 M20 3 V39 M37 3 V39" />
    </svg>
  </NavButton>
  <NavButton aria-label="Home">
    <svg width="44" height="44" viewBox="0 0 44 44" fill="none" stroke="#9b9ea1" strokeWidth="5">
      <rect x="3" y="3" width="38" height="38" rx="12" />
    </svg>
  </NavButton>
  <NavButton aria-label="Back">
    <svg width="24" height="42" viewBox="0 0 24 42" fill="none" stroke="#9b9ea1" strokeWidth="5" strokeLinecap="round">
      <path d="M21 3 L3 21 L21 39" />
    </svg>
  </NavButton>
</NavBar>;

export default function App() {
  return <React.Fragment>
    <GlobalStyle />
    <Page>
      <ChatHeader />
      <Chat>
        <Backdrop />
        <Messages>
          <PhotoMessage />
          <Message time="9:32 PM">Over 60,000 naira in one month</Message>
          <Message multi time="9:33 PM">Me wey no fit afford eat better food don dey make money for dollars sir</Message>
          <Message out tail time="9:33 PM" quote={<PhotoQuote />}>Wawu!!</Message>
          <Message out time="9:34 PM">Omo you dey vex oo</Message>
          <Bubble $tail>
            <Tail />
            <Content>
              <EmojiRow>
                <JoyFace id="joy-a" />
                <JoyFace id="joy-b" />
              </EmojiRow>
              <Stamp>9:34 PM</Stamp>
            </Content>
          </Bubble>
          <Message out tail multi time="9:35 PM" quote={<TextQuote />}>E remain make you begin dey bribe delegate with dollars oo ..I'm happy for you mehn</Message>
          <ScrollButton aria-label="Scroll to latest">
            <svg width="30" height="28" viewBox="0 0 30 28" fill="none" stroke="#8696a0" strokeWidth="4">
              <path d="M2 2 L15 14 L28 2 M2 13 L15 25 L28 13" />
            </svg>
          </ScrollButton>
        </Messages>
        <ChatComposer />
      </Chat>
      <SystemNav />
    </Page>
  </React.Fragment>;
}
